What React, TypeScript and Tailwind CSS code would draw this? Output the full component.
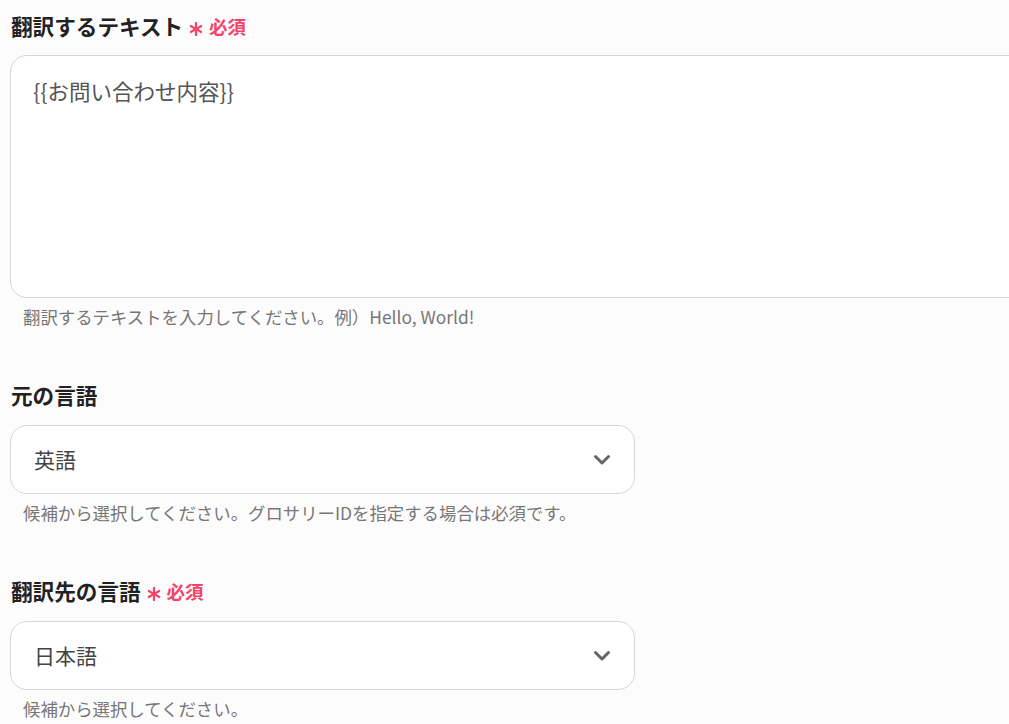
import React from 'react';

const font = { fontFamily: '"Noto Sans CJK JP", "Noto Sans", sans-serif' };

const Required = () => (
  <span className="flex items-center ml-[6px] gap-[6px] text-[#f2456b]">
    <svg width="14" height="14" viewBox="0 0 14 14" className="mt-[6px]" stroke="currentColor" strokeWidth="2.2" strokeLinecap="round">
      <line x1="7" y1="1" x2="7" y2="13" />
      <line x1="1.8" y1="4" x2="12.2" y2="10" />
      <line x1="1.8" y1="10" x2="12.2" y2="4" />
    </svg>
    <span className="text-[18.5px] font-bold leading-[30px]">必須</span>
  </span>
);

const Label = ({ text, required }: { text: string; required?: boolean }) => (
  <div className="flex items-center h-[30px] pl-[1px]">
    <span className="text-[21.6px] font-bold leading-[30px] text-[#222]">{text}</span>
    {required && <Required />}
  </div>
);

const Hint = ({ text }: { text: string }) => (
  <p className="mt-[7px] ml-[13px] text-[17.4px] leading-[24px] text-[#777]">{text}</p>
);

const Chevron = () => (
  <svg width="18" height="12" viewBox="0 0 18 12" fill="none" stroke="#666" strokeWidth="3" strokeLinecap="round" strokeLinejoin="round">
    <polyline points="2.5,2.5 9,9 15.5,2.5" />
  </svg>
);

const SelectBox = ({ value }: { value: string }) => (
  <div className="mt-[15px] w-[625px] h-[69px] rounded-[17px] border border-[#d6d4e0] bg-white flex items-center justify-between pl-[23px] pr-[23px]">
    <span className="text-[21px] text-[#444]">{value}</span>
    <Chevron />
  </div>
);

export default function App() {
  return (
    <div className="min-h-[724px] bg-[#fdfcfd] pl-[10px] pt-[11px] overflow-hidden" style={font}>
      <Label text="翻訳するテキスト" required />
      <div className="mt-[14px] w-[1030px] h-[243px] rounded-[17px] border border-[#d6d4e0] bg-white pl-[22px] pt-[20px]">
        <span className="text-[21.5px] leading-[30px] text-[#555]">{'{{お問い合わせ内容}}'}</span>
      </div>
      <Hint text="翻訳するテキストを入力してください。例）Hello, World!" />

      <div className="mt-[51px]">
        <Label text="元の言語" />
        <SelectBox value="英語" />
        <Hint text="候補から選択してください。グロサリーIDを指定する場合は必須です。" />
      </div>

      <div className="mt-[51px]">
        <Label text="翻訳先の言語" required />
        <SelectBox value="日本語" />
        <Hint text="候補から選択してください。" />
      </div>
    </div>
  );
}
